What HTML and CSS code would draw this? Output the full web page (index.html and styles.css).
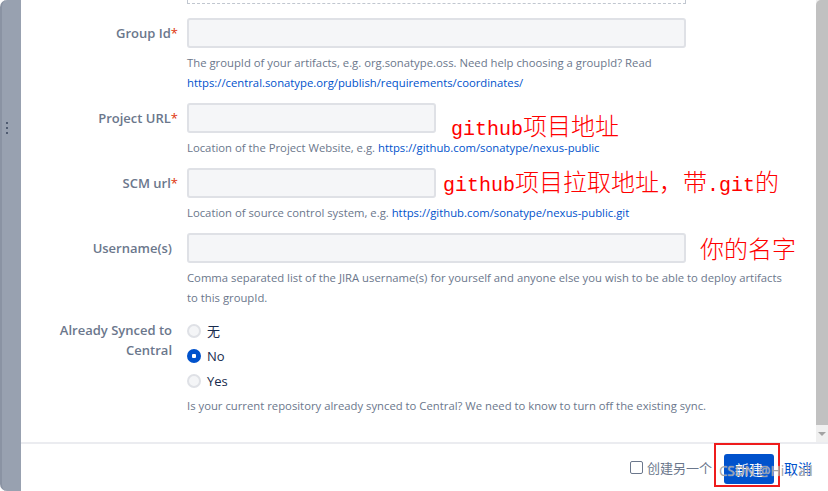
FILE: index.html
```html
<!DOCTYPE html>
<html>
<head>
<meta charset="utf-8">
<link rel="stylesheet" href="styles.css">
</head>
<body>
<div class="window">
  <div class="rail"><span class="grip"><i></i><i></i><i></i></span></div>
  <div class="dialog">
    <div class="body">
      <div class="content">
        <div class="dashed-tail"></div>
        <div class="form">
          <div class="row">
            <div class="label">Group Id<span class="req">*</span></div>
            <div class="field">
              <div class="input wide"></div>
              <div class="help">The groupId of your artifacts, e.g. org.sonatype.oss. Need help choosing a groupId? Read<br><a href="#">https://central.sonatype.org/publish/requirements/coordinates/</a></div>
            </div>
          </div>
          <div class="row">
            <div class="label">Project URL<span class="req">*</span></div>
            <div class="field">
              <div class="line">
                <div class="input narrow"></div>
                <div class="note low gap15"><span class="en">github</span>项目地址</div>
              </div>
              <div class="help">Location of the Project Website, e.g. <a href="#">https://github.com/sonatype/nexus-public</a></div>
            </div>
          </div>
          <div class="row">
            <div class="label">SCM url<span class="req">*</span></div>
            <div class="field">
              <div class="line">
                <div class="input narrow"></div>
                <div class="note gap7"><span class="en">github</span>项目拉取地址，带<span class="en">.git</span>的</div>
              </div>
              <div class="help">Location of source control system, e.g. <a href="#">https://github.com/sonatype/nexus-public.git</a></div>
            </div>
          </div>
          <div class="row">
            <div class="label">Username(s)</div>
            <div class="field">
              <div class="line">
                <div class="input wide"></div>
                <div class="note gap14">你的名字</div>
              </div>
              <div class="help">Comma separated list of the JIRA username(s) for yourself and anyone else you wish to be able to deploy artifacts<br>to this groupId.</div>
            </div>
          </div>
          <div class="row">
            <div class="label multi">Already Synced to<br>Central</div>
            <div class="field">
              <div class="radio"><span class="dot"></span><span class="cjk">无</span></div>
              <div class="radio"><span class="dot on"></span>No</div>
              <div class="radio"><span class="dot"></span>Yes</div>
              <div class="help tight">Is your current repository already synced to Central? We need to know to turn off the existing sync.</div>
            </div>
          </div>
        </div>
      </div>
      <div class="scrollbar"><div class="thumb"></div><div class="arrow"><span></span></div></div>
    </div>
    <div class="footer">
      <label class="create"><span class="check"></span>创建另一个</label>
      <span class="mark"><button class="primary">新建</button></span>
      <a class="cancel" href="#">取消</a>
    </div>
  </div>
</div>
<div class="watermark">CSDN @Hi，all</div>
</body>
</html>
```

FILE: styles.css
```css
html, body {
  margin: 0;
  padding: 0;
}
body {
  width: 828px;
  height: 491px;
  overflow: hidden;
  background: #fff;
  position: relative;
  font-family: "Open Sans", "Noto Sans", "Noto Sans CJK SC", sans-serif;
}
.window {
  display: flex;
  height: 491px;
}
.rail {
  width: 21px;
  flex: none;
  box-sizing: border-box;
  background: #98a1b0;
  border-left: 2px solid #8a93a3;
  border-radius: 7px 0 0 7px;
  padding: 122px 0 0 4px;
}
.grip i {
  display: block;
  width: 2px;
  height: 2px;
  background: #4f5b70;
  margin-bottom: 3px;
}
.dialog {
  flex: 1;
  display: flex;
  flex-direction: column;
  min-width: 0;
}
.body {
  display: flex;
  height: 442px;
  border-bottom: 2px solid #ebecf0;
}
.content {
  flex: 1;
  overflow: hidden;
}
.scrollbar {
  width: 12px;
  flex: none;
  display: flex;
  flex-direction: column;
  background: #f0f0f0;
}
.thumb {
  height: 425px;
  background: #c1c1c1;
  border-radius: 5px 0 0 0;
}
.arrow {
  flex: 1;
  display: flex;
  align-items: center;
  justify-content: center;
}
.arrow span {
  width: 0;
  height: 0;
  border-left: 4px solid transparent;
  border-right: 4px solid transparent;
  border-top: 4px solid #a3a3a3;
}
.dashed-tail {
  margin-left: 166px;
  width: 497px;
  height: 3px;
  border: 1px dashed #c1c7d0;
  border-top: 0;
}
.form {
  margin-top: 14px;
}
.row {
  display: grid;
  grid-template-columns: 151px 1fr;
  column-gap: 15px;
  margin-bottom: 10px;
}
.label {
  text-align: right;
  font-size: 13px;
  font-weight: 600;
  color: #6b778c;
  line-height: 30px;
  white-space: nowrap;
}
.label.multi {
  line-height: 20px;
  padding-top: 2px;
}
.req {
  color: #de350b;
  font-weight: 400;
  margin-right: -6px;
}
.line {
  display: flex;
  align-items: center;
  height: 30px;
}
.input {
  height: 30px;
  box-sizing: border-box;
  border: 2px solid #dfe1e6;
  border-radius: 3px;
  background: #f5f6f8;
  flex: none;
}
.input.wide { width: 499px; }
.input.narrow { width: 249px; }
.note {
  color: #ff0000;
  font-family: "Noto Sans CJK SC", sans-serif;
  font-weight: 300;
  font-size: 24px;
  line-height: 30px;
  white-space: nowrap;
}
.note .en {
  font-family: "Liberation Mono", "Noto Sans CJK SC", monospace;
  font-size: 20px;
  font-weight: 400;
}
.note.low {
  position: relative;
  top: 9px;
}
.gap15 { margin-left: 15px; }
.gap7 { margin-left: 7px; }
.gap14 { margin-left: 14px; }
.help {
  font-size: 11.3px;
  line-height: 20px;
  color: #6b778c;
  margin-top: 5px;
  white-space: nowrap;
}
.help.tight {
  margin-top: 3px;
}
.help a {
  color: #0052cc;
  text-decoration: none;
}
.radio {
  display: flex;
  align-items: center;
  gap: 6px;
  height: 25px;
  font-size: 13px;
  color: #172b4d;
}
.cjk {
  font-family: "Noto Sans CJK SC", sans-serif;
}
.dot {
  width: 14px;
  height: 14px;
  box-sizing: border-box;
  border-radius: 50%;
  border: 2px solid #dfe1e6;
  background: #f4f5f7;
  display: flex;
  align-items: center;
  justify-content: center;
}
.dot.on {
  background: #0052cc;
  border-color: #0052cc;
}
.dot.on::after {
  content: "";
  width: 4px;
  height: 4px;
  border-radius: 1px;
  background: #fff;
}
.footer {
  flex: 1;
  display: flex;
  justify-content: flex-end;
  align-items: center;
  padding-right: 16px;
  font-family: "Noto Sans CJK SC", sans-serif;
}
.create {
  display: flex;
  align-items: center;
  gap: 4px;
  font-size: 13px;
  color: #6b778c;
}
.check {
  width: 13px;
  height: 13px;
  box-sizing: border-box;
  border: 1px solid #6b778c;
  border-radius: 2px;
  background: #fff;
}
.mark {
  align-self: flex-start;
  margin-top: -1px;
  margin-left: 2px;
  border: 2px solid #ee1c1c;
  padding: 9px 4px 1px 8px;
  display: flex;
}
.primary {
  width: 50px;
  height: 30px;
  border: 0;
  border-radius: 3px;
  background: #0052cc;
  color: #fff;
  font-family: "Noto Sans CJK SC", sans-serif;
  font-size: 14px;
  padding: 0;
}
.cancel {
  margin-left: 4px;
  color: #0052cc;
  font-size: 14px;
  text-decoration: none;
}
.watermark {
  position: absolute;
  left: 719px;
  top: 463px;
  font-family: "Noto Sans", sans-serif;
  font-size: 13.5px;
  line-height: 17px;
  color: rgba(150, 150, 150, 0.85);
  text-shadow: 0 0 1px rgba(255, 255, 255, 0.9);
  white-space: nowrap;
  pointer-events: none;
}
```
